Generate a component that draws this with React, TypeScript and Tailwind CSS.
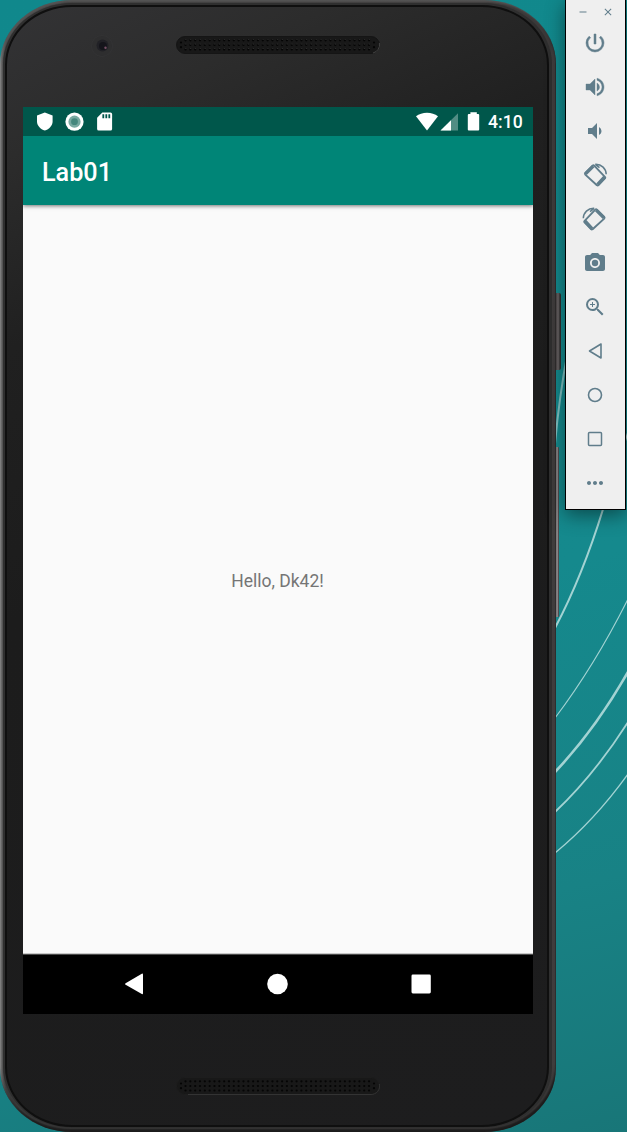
import type { ReactNode } from "react";
import {
  MdClose,
  MdMoreHoriz,
  MdPhotoCamera,
  MdPowerSettingsNew,
  MdRemove,
  MdVolumeDown,
  MdVolumeUp,
  MdZoomIn,
} from "react-icons/md";

function Wallpaper() {
  return (
    <svg className="absolute inset-0" width="627" height="1132" viewBox="0 0 627 1132" fill="none" stroke="#a3d3d3">
      <path d="M555 444Q559 398 568 350" strokeWidth="2" opacity=".75" />
      <path d="M555 628Q583 575 604 506" strokeWidth="2" />
      <path d="M555 718Q595 665 628 599" strokeWidth="1.1" />
      <path d="M555 772Q595 730 628 672" strokeWidth="2.6" />
      <path d="M555 812Q595 774 628 722" strokeWidth="1.8" />
      <path d="M555 853Q595 820 628 774" strokeWidth="1.3" />
      <path d="M625 442L628 432" strokeWidth="1.5" />
    </svg>
  );
}

const columns = Array.from({ length: 39 }, (_, i) => 9.5 + i * 4.83);

function Speaker({ lit = false }: { lit?: boolean }) {
  return (
    <svg width="204" height="18" viewBox="0 0 204 18">
      <rect x=".5" y=".5" width="203" height="17" rx="8.5" fill="#181818" stroke={lit ? "#1d1d1d" : "#151515"} />
      <path
        d={lit ? "M12 17.5H195A8.5 8.5 0 0 0 203.4 7" : "M197 17A8.5 8.5 0 0 0 203.4 7"}
        fill="none"
        stroke={lit ? "#363636" : "#484848"}
        strokeWidth=".9"
      />
      {columns.map((x) => (
        <g key={x} fill="#050505">
          <circle cx={x} cy="4.3" r="1.1" />
          <circle cx={x} cy="9" r="1.1" />
          <circle cx={x} cy="13.5" r="1.1" />
          {!lit && <path d={`M${x - 0.3} 3h1.2v.8h-1.2zM${x - 0.3} 7.7h1.2v.8h-1.2zM${x - 0.3} 12.2h1.2v.8h-1.2z`} fill="#343434" />}
        </g>
      ))}
      <g fill="#050505">
        <circle cx="5" cy="6.5" r="1.1" />
        <circle cx="5" cy="11.2" r="1.1" />
        <circle cx="198" cy="6.5" r="1.1" />
        <circle cx="198" cy="11.2" r="1.1" />
      </g>
    </svg>
  );
}

function StatusBar() {
  return (
    <div className="flex h-[29px] items-center bg-[#00574b] pl-[14px] pr-[11px]">
      <svg width="80" height="20" viewBox="0 0 80 20" fill="#fff">
        <path d="M7.8 .6L15.6 3.4V9.6C15.6 13.8 12.2 17.3 7.8 18.6C3.4 17.3 0 13.8 0 9.6V3.4Z" />
        <circle cx="37.5" cy="9.7" r="9.1" />
        <circle cx="37.5" cy="9.7" r="6.1" fill="#79aaa2" />
        <circle cx="37.5" cy="9.7" r="3.4" fill="#45877d" />
        <path d="M65.3 .5H73.5A1.6 1.6 0 0 1 75.1 2.1V16.9A1.6 1.6 0 0 1 73.5 18.5H61.7A1.6 1.6 0 0 1 60.1 16.9V5.7Z" />
        <path d="M65.4 2.2h1.8v4h-1.8zM68.4 2.2h1.8v4h-1.8zM71.4 2.2h1.8v4h-1.8z" fill="#00574b" />
      </svg>
      <svg className="ml-auto" width="72" height="20" viewBox="416 112 72 20" fill="#fff">
        <path d="M427 130.4L416 116.3Q420.6 112.8 427 112.8T438 116.3Z" />
        <path d="M458 113.3V130.5H440.5Z" opacity=".32" />
        <path d="M451 120.2V130.5H440.5Z" />
        <path d="M470.4 112.3H476.8V114H478.2A1 1 0 0 1 479.2 115V129.6A1 1 0 0 1 478.2 130.6H468.8A1 1 0 0 1 467.8 129.6V115A1 1 0 0 1 468.8 114H470.4Z" />
      </svg>
      <span className="w-[34px] pt-[2px] text-[17.6px] leading-[27px] font-medium whitespace-nowrap text-white">4:10</span>
    </div>
  );
}

function NavigationBar() {
  return (
    <div className="flex h-[60px] items-center justify-between border-t border-[#4a4a4a] bg-black px-[101px] pb-px">
      <svg width="20" height="22" viewBox="0 0 20 22" fill="#fff">
        <path d="M1.6 10.2L17.8 .7Q19 .3 19 1.5V20.3Q19 21.5 17.8 21L1.6 11.8Q.3 11 1.6 10.2Z" />
      </svg>
      <svg width="22" height="22" viewBox="0 0 22 22" fill="#fff">
        <circle cx="11.5" cy="11" r="10.3" />
      </svg>
      <svg width="22" height="22" viewBox="0 0 22 22" fill="#fff">
        <rect x="1.5" y="1.5" width="19.3" height="19" rx="1.4" />
      </svg>
    </div>
  );
}

function Screen() {
  return (
    <main className="ml-[16px] flex h-[907px] w-[510px] flex-col bg-[#fafafa]">
      <StatusBar />
      <header className="flex h-[69px] items-center bg-[#008577] pl-[19px] pt-[5px] shadow-[0_1px_4px_rgba(0,0,0,0.55)] [clip-path:inset(0_0_-8px_0)]">
        <h1 className="text-[25.2px] leading-none font-medium text-white">Lab01</h1>
      </header>
      <div className="flex grow items-center justify-center border-b border-[#c8c8c8] pt-[5px] pr-px">
        <p className="text-[17.5px] leading-none text-[#757575]">Hello, Dk42!</p>
      </div>
      <NavigationBar />
    </main>
  );
}

function Phone() {
  return (
    <div className="h-[1132px] w-[556px] rounded-[72px/64px] bg-[linear-gradient(90deg,#8a8a8a_0,#5c5c5c_1px,#4a4a4a_3px,#3b3b3b_6px,#3b3939_551px,#444141_554px,#5e5959_556px)] p-[3px_4px_4px_3px] shadow-[inset_2px_2px_2px_rgba(190,190,190,0.2),inset_-1px_-3px_2px_rgba(20,20,20,0.8)]">
      <div className="h-full rounded-[69px/61px] bg-[#2f2f2f] p-[2px_3px_1px_2px]">
        <div className="h-full w-[544px] rounded-[67px/60px] border-2 border-[#0f0f0f] bg-[linear-gradient(155deg,#333335_0%,#2c2c2c_11%,#202020_25%,#1c1c1c_45%,#1d1d1e_100%)]">
          <div className="flex h-[100px] items-start pl-[84px] pt-[28px]">
            <svg width="22" height="22" viewBox="0 0 22 22">
              <circle cx="11" cy="11" r="10.5" fill="#2e2e2f" stroke="#353537" strokeWidth=".7" />
              <circle cx="11.5" cy="10.5" r="6" fill="#212126" />
              <circle cx="12" cy="11" r="4" fill="#15151b" />
              <circle cx="14.5" cy="12.8" r="1.2" fill="#765065" />
            </svg>
            <div className="ml-[63px] mt-px">
              <Speaker />
            </div>
          </div>
          <Screen />
          <div className="flex pl-[169px] pt-[63px]">
            <Speaker lit />
          </div>
        </div>
      </div>
    </div>
  );
}

function SideButtons() {
  return (
    <div className="flex w-[9px] flex-col gap-[77px] pt-[293px]">
      <div className="h-[77px] w-[5px] rounded-r-[2px] bg-[linear-gradient(90deg,#454041_0,#6b6667_2px,#555152_3px,#2f2e2f_4px)]" />
      <div className="h-[170px] w-[3px] rounded-r-[1px] bg-[linear-gradient(90deg,#777375_0,#8d898b_2px,#504c4e_2px)]" />
    </div>
  );
}

function RotateDevice({ right = false }: { right?: boolean }) {
  return (
    <svg width="26" height="26" viewBox="0 0 26 26" fill="none" stroke="currentColor">
      <g transform={right ? "translate(25.5 0) scale(-1 1)" : undefined}>
        <path
          d="M10.6 3.7L3.3 11Q2.5 11.8 3.3 12.6L14.9 23.2Q15.7 24 16.5 23.2L22.9 16.4Q23.7 15.6 22.9 14.8L12.2 3.7Q11.4 2.9 10.6 3.7Z"
          strokeWidth="1.9"
        />
        <path d="M3.5 11.9L11.3 4.1M15.5 22.6L22.6 15" strokeWidth="3.4" />
        <path d="M13.3 2.3C19.6 2 24.1 6.8 24.2 12.2M13.3 2.3L17.5 5.7" strokeWidth="1.5" />
      </g>
    </svg>
  );
}

const tools: { name: string; icon: ReactNode }[] = [
  { name: "Power", icon: <MdPowerSettingsNew size={24} className="[&_path:last-child]:stroke-current [&_path:last-child]:[stroke-width:0.5px]" /> },
  { name: "Volume up", icon: <MdVolumeUp size={24} className="[&_path:last-child]:stroke-current [&_path:last-child]:[stroke-width:0.4px]" /> },
  { name: "Volume down", icon: <MdVolumeDown size={24} /> },
  { name: "Rotate left", icon: <RotateDevice /> },
  { name: "Rotate right", icon: <RotateDevice right /> },
  { name: "Take screenshot", icon: <MdPhotoCamera size={24} /> },
  { name: "Zoom", icon: <MdZoomIn size={24} /> },
  {
    name: "Back",
    icon: (
      <svg width="24" height="24" viewBox="0 0 24 24" fill="none" stroke="currentColor" strokeWidth="1.6" strokeLinejoin="round">
        <path d="M18 5V19L6.5 12Z" />
      </svg>
    ),
  },
  {
    name: "Home",
    icon: (
      <svg width="24" height="24" viewBox="0 0 24 24" fill="none" stroke="currentColor" strokeWidth="1.6">
        <circle cx="12" cy="12" r="6.5" />
      </svg>
    ),
  },
  {
    name: "Overview",
    icon: (
      <svg width="24" height="24" viewBox="0 0 24 24" fill="none" stroke="currentColor" strokeWidth="1.5">
        <rect x="5.5" y="5.5" width="13" height="13" rx="1" />
      </svg>
    ),
  },
  { name: "More", icon: <MdMoreHoriz size={24} /> },
];

function Toolbar() {
  return (
    <aside className="flex h-[510px] w-[61px] flex-col border border-t-0 border-black bg-[#efefef] text-[#607d8b] shadow-[0_5px_18px_rgba(0,0,0,0.45)]">
      <div className="flex h-[21px] items-center justify-center gap-[13px] pt-[3px]">
        <MdRemove size={12} />
        <MdClose size={12} />
      </div>
      {tools.map((tool) => (
        <button key={tool.name} aria-label={tool.name} className="flex h-[44px] w-full items-center justify-center pr-px">
          {tool.icon}
        </button>
      ))}
    </aside>
  );
}

export default function App() {
  return (
    <div className="relative h-[1132px] w-[627px] overflow-hidden bg-[linear-gradient(165deg,#10888c_0%,#15898d_55%,#188285_80%,#187678_100%)] font-[Roboto,sans-serif]">
      <Wallpaper />
      <div className="relative flex items-start">
        <Phone />
        <SideButtons />
        <Toolbar />
      </div>
    </div>
  );
}
